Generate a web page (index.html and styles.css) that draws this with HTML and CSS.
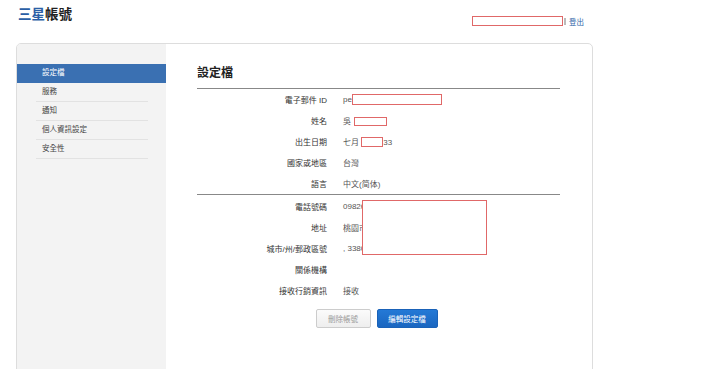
FILE: index.html
```html
<!DOCTYPE html>
<html lang="zh-Hant">
<head>
    <meta charset="UTF-8">
    <meta name="viewport" content="width=device-width, initial-scale=1.0">
    <title>三星帳號</title>
    <link rel="stylesheet" href="styles.css">
</head>
<body>
    <div class="page">
        <div class="topbar">
            <h1 class="brand"><span class="brand-blue">三星</span>帳號</h1>
            <div class="account">
                <span class="redact redact-user"></span>
                <span class="divider"></span>
                <a href="#" class="logout">登出</a>
            </div>
        </div>

        <div class="card">
            <ul class="sidebar">
                <li class="active"><a href="#">設定檔</a></li>
                <li><a href="#">服務</a></li>
                <li><a href="#">通知</a></li>
                <li><a href="#">個人資訊設定</a></li>
                <li><a href="#">安全性</a></li>
            </ul>

            <div class="main">
                <h2>設定檔</h2>

                <div class="group">
                    <div class="row"><span class="label">電子郵件 ID</span><span class="value">pe<span class="redact redact-email"></span></span></div>
                    <div class="row"><span class="label">姓名</span><span class="value">吳<span class="redact redact-name"></span></span></div>
                    <div class="row"><span class="label">出生日期</span><span class="value">七月 <span class="redact redact-day"></span>33</span></div>
                    <div class="row"><span class="label">國家或地區</span><span class="value">台灣</span></div>
                    <div class="row"><span class="label">語言</span><span class="value">中文(简体)</span></div>
                </div>

                <div class="group group-contact">
                    <div class="row"><span class="label">電話號碼</span><span class="value">09826</span></div>
                    <div class="row"><span class="label">地址</span><span class="value">桃園市</span></div>
                    <div class="row"><span class="label">城市/州/郵政區號</span><span class="value">, 3380</span></div>
                    <div class="row"><span class="label">關係機構</span><span class="value"></span></div>
                    <div class="row"><span class="label">接收行銷資訊</span><span class="value">接收</span></div>
                    <span class="redact redact-contact"></span>
                </div>

                <div class="actions">
                    <button class="btn btn-delete">刪除帳號</button>
                    <button class="btn btn-edit">編輯設定檔</button>
                </div>
            </div>
        </div>
    </div>
</body>
</html>
```

FILE: styles.css
```css
body {
    margin: 0;
    background: #fff;
    font-family: "Liberation Sans", "Noto Sans CJK TC", sans-serif;
    color: #333;
}

.page {
    width: 577px;
    margin-left: 16px;
}

.topbar {
    display: flex;
    justify-content: space-between;
    align-items: flex-start;
    height: 43px;
}

.brand {
    margin: 7px 0 0 2px;
    font-size: 13.5px;
    line-height: 16px;
    font-weight: bold;
    color: #222;
}

.brand-blue {
    color: #2b5fa6;
}

.account {
    display: flex;
    align-items: center;
    gap: 1px;
    margin: 15px 9px 0 0;
}

.redact {
    display: inline-block;
    box-sizing: border-box;
    border: 1px solid #e06868;
    background: #fff;
    vertical-align: middle;
}

.redact-user {
    width: 91px;
    height: 10px;
}

.divider {
    width: 2px;
    height: 7px;
    background: #bbb;
    margin-right: 2px;
}

.logout {
    font-size: 7.5px;
    color: #2b5fa6;
    text-decoration: none;
    margin-top: 1px;
}

.card {
    display: flex;
    border: 1px solid #ddd;
    border-radius: 5px;
    min-height: 340px;
    overflow: hidden;
}

.sidebar {
    width: 149px;
    margin: 0;
    padding: 20px 0 0;
    list-style: none;
    background: #f3f3f3;
}

.sidebar li {
    padding: 0 18px 0 19px;
}

.sidebar a {
    display: block;
    padding-left: 6px;
    line-height: 18px;
    font-size: 7.5px;
    color: #444;
    text-decoration: none;
    border-bottom: 1px solid #e2e2e2;
}

.sidebar li.active {
    background: #3a70b2;
}

.sidebar li.active a {
    color: #fff;
    border-bottom-color: transparent;
}

.main {
    flex: 1;
    padding: 22px 32px 0 31px;
}

.main h2 {
    margin: 0;
    padding-bottom: 7px;
    font-size: 12px;
    line-height: 15px;
    color: #222;
    border-bottom: 1px solid #888;
}

.group {
    position: relative;
    border-bottom: 1px solid #888;
}

.group-contact {
    border-bottom: none;
    padding-top: 1px;
}

.row {
    display: grid;
    grid-template-columns: 130px 1fr;
    column-gap: 16px;
    height: 21px;
    align-items: center;
    font-size: 8px;
}

.label {
    text-align: right;
    color: #333;
}

.value {
    color: #555;
    white-space: nowrap;
}

.redact-email {
    width: 90px;
    height: 11px;
}

.redact-name {
    width: 33px;
    height: 9px;
    margin-left: 3px;
}

.redact-day {
    width: 22px;
    height: 10px;
}

.redact-contact {
    position: absolute;
    top: 5px;
    left: 165px;
    width: 125px;
    height: 55px;
}

.actions {
    display: flex;
    justify-content: center;
    gap: 6px;
    margin-top: 8px;
    padding-right: 4px;
}

.btn {
    height: 19px;
    padding: 0;
    border-radius: 2px;
    font-family: inherit;
    font-size: 7.5px;
}

.btn-delete {
    width: 55px;
    background: linear-gradient(#fbfbfb, #eee);
    border: 1px solid #ccc;
    color: #999;
}

.btn-edit {
    width: 61px;
    background: linear-gradient(#2479d6, #1a66c0);
    border: 1px solid #1a62b8;
    color: #fff;
}
```
